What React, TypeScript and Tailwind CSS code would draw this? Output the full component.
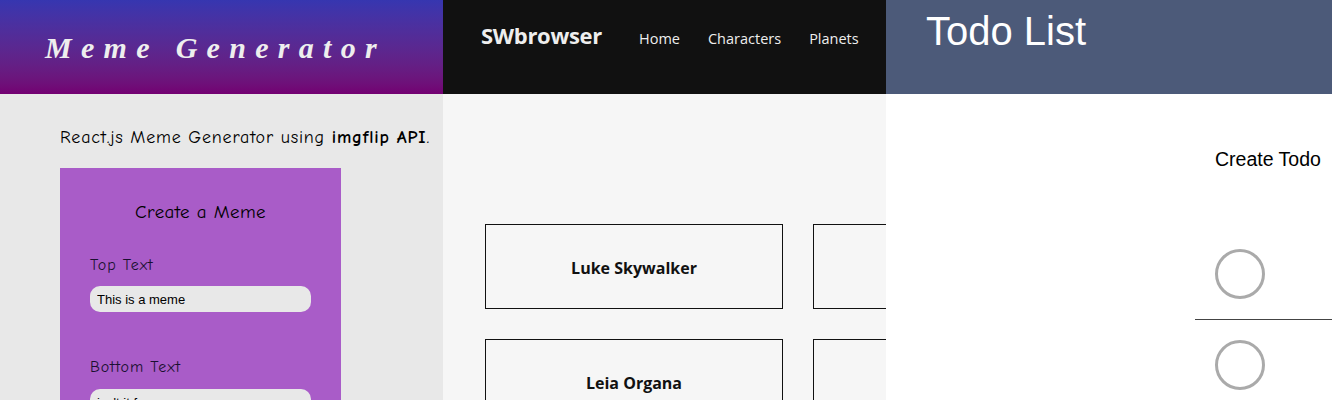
import React from "react";

const comic = { fontFamily: '"Comic Sans MS", "Comic Neue", "DejaVu Sans", sans-serif' };

function MemePanel() {
  return (
    <div className="flex h-[400px] w-[443px] shrink-0 flex-col overflow-hidden bg-[#e8e8e8]" style={comic}>
      <header className="flex h-[94px] shrink-0 items-center bg-gradient-to-b from-[#3636b0] to-[#730072] pl-[45px]">
        <h1 className="font-['Liberation_Serif',serif] text-[30px] font-bold italic tracking-[9.3px] text-[#eeeeee]">
          Meme Generator
        </h1>
      </header>
      <div className="pl-[60px] pt-[32px]">
        <p className="text-[18px] leading-[24px] tracking-[0.8px] text-black">
          React.js Meme Generator using <b>imgflip API</b>.
        </p>
        <form className="mt-[18px] w-[281px] bg-[#a95cc8] pt-[32px] pb-8">
          <h2 className="text-center text-[19px] leading-[24px] tracking-[0.4px] text-black">Create a Meme</h2>
          <div className="px-[30px] pt-[31px]">
            <label className="block text-[16px] leading-[20px] tracking-[0.9px] text-[#1a1030]">Top Text</label>
            <input
              readOnly
              value="This is a meme"
              className="mt-[11px] h-[26px] w-[221px] rounded-[10px] bg-[#e8e8e8] px-[7px] font-['Liberation_Sans',sans-serif] text-[13px] text-black outline-none"
            />
            <label className="mt-[45px] block text-[16px] leading-[20px] tracking-[0.9px] text-[#1a1030]">Bottom Text</label>
            <input
              readOnly
              value="isn't it funny"
              className="mt-[12px] h-[26px] w-[221px] rounded-[10px] bg-[#e8e8e8] px-[7px] font-['Liberation_Sans',sans-serif] text-[13px] text-black outline-none"
            />
          </div>
        </form>
      </div>
    </div>
  );
}

const people = ["Luke Skywalker", "C-3PO", "Leia Organa", "Darth Vader"];

function SwPanel() {
  return (
    <div className="flex h-[400px] w-[443px] shrink-0 flex-col overflow-hidden bg-[#f6f6f6] font-['Open_Sans',sans-serif]">
      <header className="flex h-[94px] shrink-0 items-start bg-[#111111] pl-[38px] pt-[20px]">
        <span className="text-[22px] font-bold leading-[30px] tracking-[-0.3px] text-[#eeeeee]">SWbrowser</span>
        <nav className="ml-[37px] flex gap-[28px] pt-[7px] text-[14.5px] leading-[24px] text-[#eeeeee]">
          <a>Home</a>
          <a>Characters</a>
          <a>Planets</a>
        </nav>
      </header>
      <div className="grid w-[700px] grid-cols-[298px_298px] gap-[30px] pl-[42px] pt-[130px]">
        {people.map((p) => (
          <div
            key={p}
            className="flex h-[85px] items-center justify-center border border-[#111111] pt-[2px] text-[16px] font-bold text-[#111111]"
          >
            {p}
          </div>
        ))}
      </div>
    </div>
  );
}

function TodoPanel() {
  return (
    <div className="flex h-[400px] w-[446px] shrink-0 flex-col overflow-hidden bg-white font-['Liberation_Sans',sans-serif]">
      <header className="h-[94px] shrink-0 bg-[#4c5a79] pl-[40px] pt-[8px]">
        <h1 className="text-[40px] leading-[46px] text-white">Todo List</h1>
      </header>
      <div className="w-[600px] pl-[309px] pt-[52px]">
        <h2 className="pl-[20px] text-[19.5px] leading-[26px] text-black">Create Todo</h2>
        <ul className="mt-[77px]">
          {[0, 1].map((i) => (
            <li key={i} className="border-b border-[#444444] pb-[20px] pl-[20px] [&+li]:pt-[20px]">
              <div className="h-[50px] w-[50px] rounded-full border-[3px] border-[#aaaaaa]" />
            </li>
          ))}
        </ul>
      </div>
    </div>
  );
}

export default function App() {
  return (
    <div className="flex h-[400px] w-[1332px] overflow-hidden">
      <MemePanel />
      <SwPanel />
      <TodoPanel />
    </div>
  );
}
